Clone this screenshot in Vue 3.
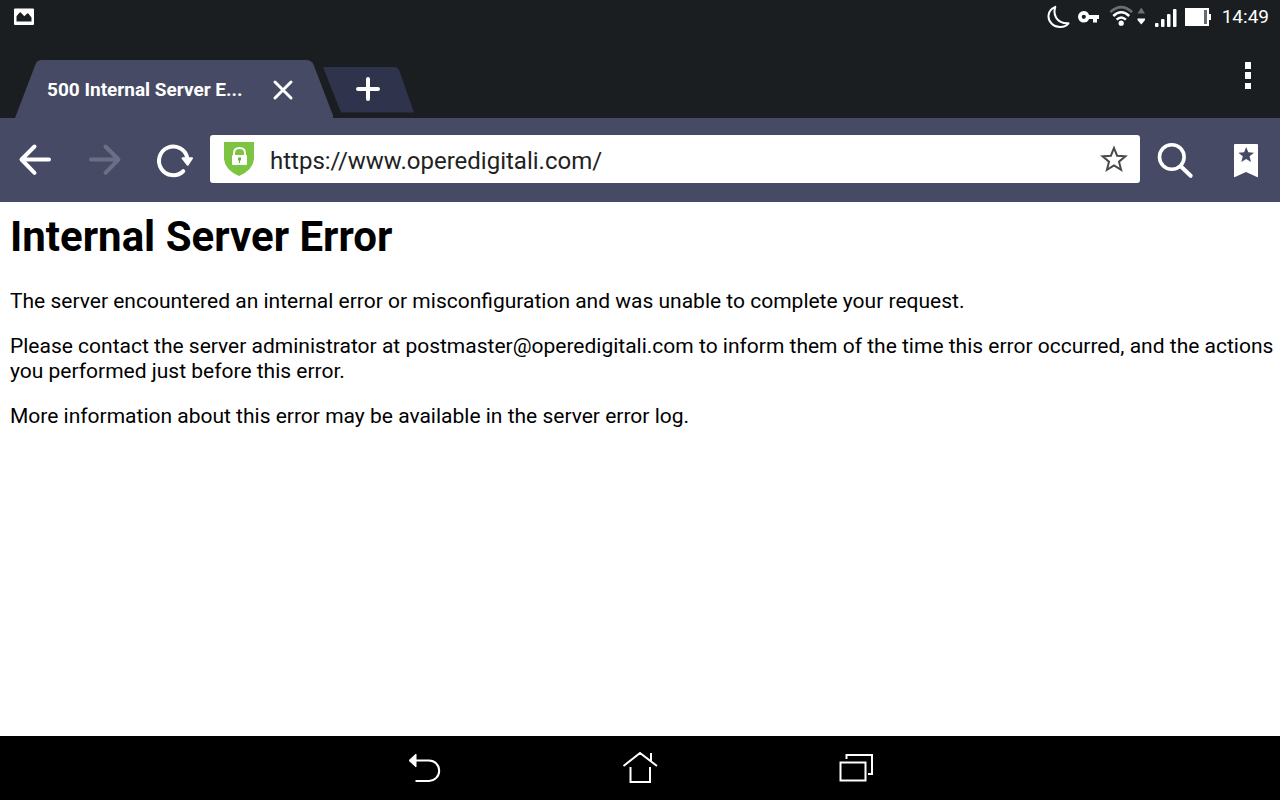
<script setup>
import { ref } from 'vue'

const url = ref('https://www.operedigitali.com/')
const signalBars = [
  { x: 1, height: 4 },
  { x: 7, height: 8 },
  { x: 13, height: 13 },
  { x: 19, height: 18 },
]
</script>

<template>
  <div class="screen">
    <div class="status">
      <svg class="picture" width="20" height="18" viewBox="0 0 20 18" aria-hidden="true">
        <path fill="#fff" fill-rule="evenodd" d="M1 0.5H19Q20 .5 20 1.5V16Q20 17 19 17H1Q0 17 0 16V1.5Q0 .5 1 .5ZM2.5 13.5H17.5V9.5L14.3 5.5Q13.8 5 13.2 5.6L10.3 8.2L7 4.7Q6.2 4 5.4 4.7L2.5 8.2Z" />
      </svg>
      <div class="indicators">
        <svg width="24" height="24" viewBox="0 0 24 24" aria-hidden="true">
          <path d="M8.3 1.9C6 8.5 8.5 18.8 21.5 18.3C17.5 23.1 9.5 23.2 5 19C-.8 13.6 .9 4.8 8.3 1.9Z" fill="none" stroke="#fff" stroke-width="2" stroke-linejoin="round" />
        </svg>
        <svg width="21" height="12" viewBox="0 0 21 12" aria-hidden="true">
          <path fill="#fff" fill-rule="evenodd" d="M5.8 0Q9.7 0 11.1 4H21V8H19V11.5H15V8H11.1Q9.6 11.6 5.8 11.6A5.8 5.8 0 0 1 5.8 0ZM5.8 3.7A2.1 2.1 0 1 0 5.8 7.9A2.1 2.1 0 1 0 5.8 3.7Z" />
        </svg>
        <svg class="wifi" width="38" height="24" viewBox="0 0 38 24" aria-hidden="true">
          <g fill="none" stroke-width="2.5">
            <path d="M1.3 7.200Q12 -3 23.2 7.200" stroke="#6c6f70" />
            <path d="M4.3 11Q12.2 3.400 20.2 11" stroke="#fff" />
            <path d="M7.6 14.700Q12.2 10.200 16.9 14.700" stroke="#fff" />
          </g>
          <circle cx="12.2" cy="18.200" r="2.6" fill="#fff" />
          <path d="M28.500 8.500L32.300 2.500L36 8.500Z" fill="#6c6f70" />
          <path d="M28.500 13.500H36V15L32.300 19.500L28.500 15Z" fill="#fff" />
        </svg>
        <svg width="24" height="22" viewBox="0 0 24 22" aria-hidden="true">
          <rect v-for="bar in signalBars" :key="bar.x" :x="bar.x" :y="21 - bar.height" width="3.5" :height="bar.height" rx="1" fill="#fff" />
        </svg>
        <svg class="battery" width="26" height="18" viewBox="0 0 26 18" aria-hidden="true">
          <path fill="#fff" d="M0 0H24V6H26V12H24V18H0Z" />
          <path fill="#686a6b" d="M19 2H22V16H19Z" />
        </svg>
        <time>14:49</time>
      </div>
    </div>

    <div class="tabs">
      <div class="tab">
        <svg class="shape" viewBox="0 0 318 58" preserveAspectRatio="none" aria-hidden="true">
          <path d="M0 58L20.5 4.2Q22 0 27 0H291Q296.500 0 298.500 4.500L319 58Z" fill="#464a64" />
        </svg>
        <button class="title">500 Internal Server E...</button>
        <button class="close" aria-label="Close tab">
          <svg width="22" height="22" viewBox="0 0 22 22"><path d="M3 3L19 19M19 3L3 19" stroke="#fff" stroke-width="3" stroke-linecap="round" /></svg>
        </button>
      </div>
      <button class="new-tab" aria-label="New tab">
        <svg width="92" height="46" viewBox="0 0 92 46">
          <path d="M1 0H72Q76 0 77.500 4L92 45.500H19Z" fill="#2f334b" />
          <path d="M46 12V32M36 22H56" stroke="#fff" stroke-width="4" stroke-linecap="round" />
        </svg>
      </button>
      <button class="menu" aria-label="Menu">
        <svg width="8" height="28" viewBox="0 0 8 28"><path fill="#fff" d="M1 0H7V7H1ZM1 10H7V17H1ZM1 21H7V27H1Z" /></svg>
      </button>
    </div>

    <div class="toolbar">
      <button class="tool" aria-label="Back">
        <svg width="70" height="84" viewBox="0 0 70 84">
          <path d="M49 41.500H22M34.500 28.500L21.500 41.500L34.500 54.800" fill="none" stroke="#fff" stroke-width="4" stroke-linecap="round" stroke-linejoin="round" />
        </svg>
      </button>
      <button class="tool" aria-label="Forward" disabled>
        <svg width="70" height="84" viewBox="0 0 70 84">
          <path d="M21 41.500H48M35.500 28.500L48.500 41.500L35.500 54.800" fill="none" stroke="#6b6e84" stroke-width="4" stroke-linecap="round" stroke-linejoin="round" />
        </svg>
      </button>
      <button class="tool" aria-label="Reload">
        <svg width="70" height="84" viewBox="0 0 70 84">
          <path d="M43.200 53.200A14.300 14.300 0 1 1 47.200 39.500" fill="none" stroke="#fff" stroke-width="4" stroke-linecap="round" />
          <path d="M42.500 40.200H52L47.700 46.800Z" fill="#fff" stroke="#fff" stroke-width="2" stroke-linejoin="round" />
        </svg>
      </button>
      <div class="address">
        <svg width="30" height="36" viewBox="0 0 30 36" aria-hidden="true">
          <path d="M0 1H30V18Q29 29 15 35Q1 29 0 18Z" fill="#7dc442" />
          <path d="M10 15V12Q10 7 15.500 7Q21 7 21 12V15" fill="none" stroke="#fff" stroke-width="2" />
          <rect x="8" y="14" width="15" height="10" rx="1" fill="#fff" />
          <path d="M14 16.500H17V19.500H16V22H15V19.500H14Z" fill="#6fae3d" />
        </svg>
        <input v-model="url" type="text" aria-label="Address" spellcheck="false">
        <button class="star" aria-label="Add bookmark">
          <svg width="28" height="28" viewBox="0 0 28 28">
            <path d="M14 3L17.100 10.700L25.400 11.300L19 16.700L21.100 24.800L14 20.500L6.900 24.800L9 16.700L2.600 11.300L10.900 10.700Z" fill="none" stroke="#494949" stroke-width="2" />
          </svg>
        </button>
      </div>
      <button class="tool" aria-label="Search">
        <svg width="70" height="84" viewBox="0 0 70 84">
          <circle cx="31.800" cy="39" r="12.300" fill="none" stroke="#fff" stroke-width="3.600" />
          <path d="M41 48.500L50.700 57.800" stroke="#fff" stroke-width="4" stroke-linecap="round" />
        </svg>
      </button>
      <button class="tool" aria-label="Bookmarks">
        <svg width="70" height="84" viewBox="0 0 70 84">
          <path d="M25 26H47Q48 26 48 27V58.500Q48 59.500 47 59L36 54L25 59Q24 59.500 24 58.500V27Q24 26 25 26Z" fill="#fff" />
          <path d="M36.200 29L38.300 34.300L44 34.700L39.600 38.300L41 44L36.200 41L31.400 44L32.800 38.300L28.400 34.700L34.100 34.300Z" fill="#464a64" />
        </svg>
      </button>
    </div>

    <main>
      <h1>Internal Server Error</h1>
      <p>The server encountered an internal error or misconfiguration and was unable to complete your request.</p>
      <p>Please contact the server administrator at postmaster@operedigitali.com to inform them of the time this error occurred, and the actions you performed just before this error.</p>
      <p>More information about this error may be available in the server error log.</p>
    </main>

    <nav>
      <button aria-label="System back">
        <svg width="40" height="40" viewBox="0 0 40 40">
          <path d="M9 9.500H25A10.200 10.200 0 0 1 25 29.900H11.500" fill="none" stroke="#fff" stroke-width="2" />
          <path d="M5 9.500L12 3V16Z" fill="#fff" stroke="#fff" stroke-linejoin="round" />
        </svg>
      </button>
      <button aria-label="Home">
        <svg width="40" height="40" viewBox="0 0 40 40" fill="none" stroke="#fff" stroke-width="2">
          <path d="M3.500 15L20 2L37 15M31 2V10M10.500 16V31H30V16" />
        </svg>
      </button>
      <button aria-label="Recent apps">
        <svg width="40" height="40" viewBox="0 0 40 40" fill="none" stroke="#fff" stroke-width="2">
          <path d="M4.500 11.500H29.500V29.500H4.500ZM10.500 8V4H36V23H32" />
        </svg>
      </button>
    </nav>
  </div>
</template>

<style>
body {
  margin: 0;
}
</style>

<style scoped>
.screen {
  min-height: 100vh;
  display: flex;
  flex-direction: column;
  background: #fff;
  font-family: Roboto, "Liberation Sans", sans-serif;
}

button {
  padding: 0;
  border: 0;
  background: none;
  font: inherit;
  color: inherit;
}

svg {
  display: block;
}

.status {
  height: 34px;
  padding: 0 11px 0 14px;
  display: flex;
  align-items: center;
  justify-content: space-between;
  background: #1a1e20;
  color: #fff;
}

.indicators {
  display: flex;
  align-items: center;
  gap: 7px;
}

.wifi {
  margin-left: 3px;
}

time {
  margin-left: 4px;
  font-size: 19px;
  line-height: 24px;
}

.tabs {
  height: 84px;
  padding: 0 24px 0 15px;
  display: flex;
  align-items: flex-end;
  background: #1a1e20;
  color: #fff;
}

.tab {
  position: relative;
  width: 318px;
  height: 58px;
  padding: 2px 39px 0 32px;
  box-sizing: border-box;
  display: flex;
  align-items: center;
  justify-content: space-between;
}

.shape {
  position: absolute;
  inset: 0;
  width: 100%;
  height: 100%;
}

.title,
.close {
  position: relative;
}

.title {
  font-size: 19px;
  font-weight: 700;
  line-height: 24px;
  white-space: nowrap;
}

.new-tab {
  margin: 0 0 5px -11px;
}

.menu {
  margin: 0 4px 28px auto;
}

.toolbar {
  height: 84px;
  display: flex;
  align-items: center;
  background: #464a64;
}

.tool {
  flex: none;
  width: 70px;
}

.address {
  flex: 1;
  min-width: 0;
  height: 48px;
  margin-bottom: 2px;
  padding: 0 12px 0 14px;
  box-sizing: border-box;
  display: flex;
  align-items: center;
  border-radius: 3px;
  background: #fff;
}

input {
  flex: 1;
  min-width: 0;
  height: 48px;
  margin-left: 16px;
  padding: 4px 0 0;
  box-sizing: border-box;
  border: 0;
  outline: 0;
  background: none;
  color: #222;
  font: 24px/32px Roboto, "Liberation Sans", sans-serif;
}

main {
  flex: 1;
  padding: 10px 4px 10px 10px;
  color: #000;
}

h1 {
  margin: 0 0 27px;
  font-size: 42px;
  line-height: 50px;
}

p {
  margin: 0 0 20px;
  font-size: 21px;
  line-height: 25px;
}

nav {
  height: 64px;
  padding-top: 6px;
  box-sizing: border-box;
  display: flex;
  align-items: center;
  justify-content: center;
  gap: 176px;
  background: #000;
}
</style>
